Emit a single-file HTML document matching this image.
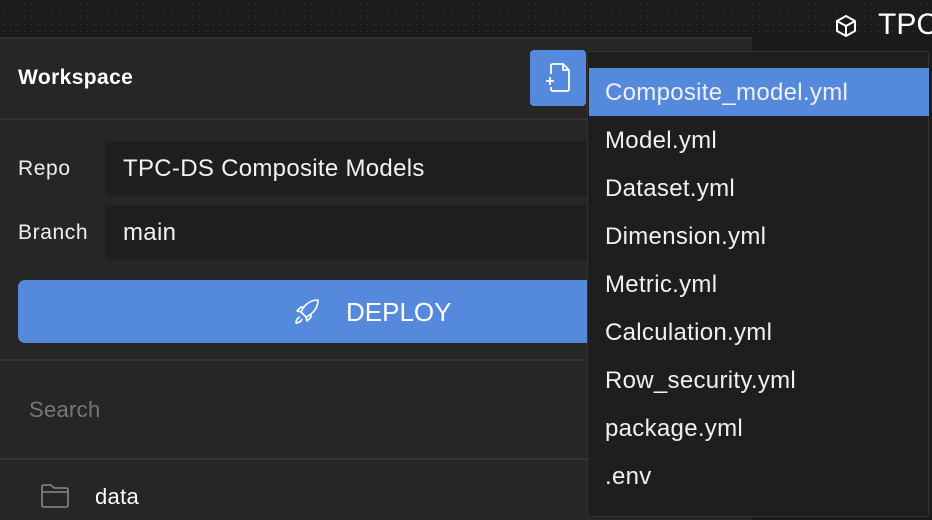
<!DOCTYPE html>
<html><head><meta charset="utf-8"><style>
*{margin:0;padding:0;box-sizing:border-box}
body{width:932px;height:520px;overflow:hidden;background:#1b1b1b;font-family:"Liberation Sans",sans-serif;color:#fff;position:relative}
.dots{position:absolute;left:0;top:0;width:932px;height:37px;background-image:radial-gradient(#3a3a3a 0.6px,transparent 0.8px);background-size:7px 7px}
.panel{position:absolute;left:0;top:37px;width:752px;height:483px;background:#262626;border-top:2px solid #303030}
.hdr{position:absolute;left:18px;top:66px;font-weight:bold;font-size:21px;letter-spacing:0.4px}
.line{position:absolute;left:0;width:752px;height:2px;background:#333}
.lbl{position:absolute;left:18px;font-size:21px;color:#eee;letter-spacing:0.6px}
.field{position:absolute;left:105px;width:500px;height:55px;background:#1f1f1f;border-radius:4px;font-size:24px;letter-spacing:0.3px;padding:14px 18px;color:#f2f2f2}
.deploy{position:absolute;left:18px;top:280px;width:600px;height:63px;background:#5589dc;border-radius:7px}
.dtext{position:absolute;left:346px;top:297px;font-size:26px;color:#fff}
.addbtn{position:absolute;left:530px;top:50px;width:56px;height:56px;background:#5589dc;border-radius:4px}
.menu{position:absolute;left:587px;top:51px;width:342px;height:466px;background:#1e1e1e;border:1px solid #333;border-radius:3px}
.item{position:absolute;left:1px;width:340px;height:48px;font-size:24px;letter-spacing:0.3px;padding:11px 16px;color:#f0f0f0}
.sel{background:#5589dc}
</style></head><body>
<div class="dots"></div>
<svg style="position:absolute;left:835px;top:14px" width="22" height="24" viewBox="0 0 22 24" fill="none" stroke="#fff" stroke-width="2" stroke-linejoin="round"><path d="M11 2 L20 7 V17 L11 22 L2 17 V7 Z M2 7 L11 12 L20 7 M11 12 V22"/></svg>
<div style="position:absolute;left:878px;top:8px;font-size:30px">TPC</div>
<div class="panel"></div>
<div class="hdr">Workspace</div>
<div class="line" style="top:118px"></div>
<div class="lbl" style="top:157px">Repo</div>
<div class="field" style="top:141px">TPC-DS Composite Models</div>
<div class="lbl" style="top:221px">Branch</div>
<div class="field" style="top:205px">main</div>
<div class="deploy"></div>
<svg style="position:absolute;left:292px;top:297px" width="30" height="30" viewBox="0 0 30 30" fill="none" stroke="#fff" stroke-width="1.6" stroke-linejoin="round"><path d="M26 3 C18 3 12 8 9 15 L14 20 C21 17 26 11 26 3 Z M9 15 L5 14 L9 10 L13 10 M14 20 L15 24 L19 20 L19 17 M8 20 C5 21 4 24 4 26 C6 26 9 25 10 22"/></svg>
<div class="dtext">DEPLOY</div>
<div class="line" style="top:359px"></div>
<div style="position:absolute;left:29px;top:397px;font-size:22px;color:#777;letter-spacing:0.3px">Search</div>
<div class="line" style="top:458px"></div>
<svg style="position:absolute;left:40px;top:483px" width="30" height="26" viewBox="0 0 30 26" fill="none" stroke="#888" stroke-width="1.6"><path d="M2 4 Q2 2 4 2 H11 L14 5 H26 Q28 5 28 7 V22 Q28 24 26 24 H4 Q2 24 2 22 Z M2 9 H28"/></svg>
<div style="position:absolute;left:95px;top:484px;font-size:22px;letter-spacing:0.3px">data</div>
<div class="addbtn"></div>
<svg style="position:absolute;left:544px;top:62px" width="30" height="32" viewBox="0 0 30 32" fill="none" stroke="#fff" stroke-width="1.8" stroke-linejoin="round"><path d="M7 12 V4 Q7 2 9 2 H19 L25 8 V27 Q25 29 23 29 H9 Q7 29 7 27 V25 M19 2 V8 H25 M2 19 H10 M6 15 V23"/></svg>
<div class="menu">
<div class="item sel" style="top:16px">Composite_model.yml</div>
<div class="item" style="top:64px">Model.yml</div>
<div class="item" style="top:112px">Dataset.yml</div>
<div class="item" style="top:160px">Dimension.yml</div>
<div class="item" style="top:208px">Metric.yml</div>
<div class="item" style="top:256px">Calculation.yml</div>
<div class="item" style="top:304px">Row_security.yml</div>
<div class="item" style="top:352px">package.yml</div>
<div class="item" style="top:400px">.env</div>
</div>
</body></html>
